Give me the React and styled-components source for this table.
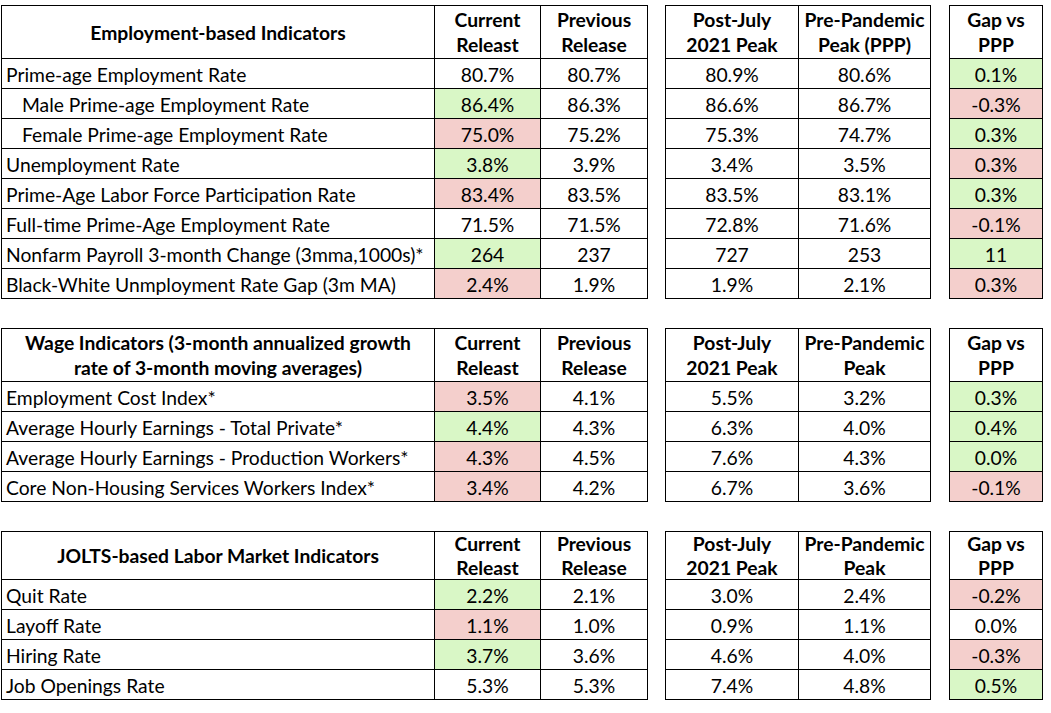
import React from "react";
import styled, { createGlobalStyle } from "styled-components";

const GlobalStyle = createGlobalStyle`
  body {
    margin: 0;
    background: #ffffff;
    font-family: Lato, "Liberation Sans", sans-serif;
    color: #000000;
  }
`;

const Page = styled.div`
  display: flex;
  flex-direction: column;
  gap: 29px;
  padding: 5px 0 0 1px;
`;

const Section = styled.div`
  display: flex;
  align-items: flex-start;
  gap: 17px;
`;

const Group = styled.table`
  border-collapse: collapse;
  table-layout: fixed;
  width: ${(p) => p.width}px;
  margin-right: ${(p) => p.spaceAfter || 0}px;
`;

const HeadCell = styled.th`
  border: 1px solid #000;
  padding: 0 2px;
  height: ${(p) => p.h}px;
  font-size: 19.3px;
  font-weight: 700;
  line-height: ${(p) => p.lh}px;
  text-align: center;
  vertical-align: middle;
  white-space: nowrap;
`;

const tones = {
  good: "#d9f7c6",
  bad: "#f4cfcc",
};

const Row = styled.tr`
  height: 30px;
`;

const Label = styled.td`
  border: 1px solid #000;
  padding: 1px 0 0 ${(p) => (p.indent ? 20 : 4)}px;
  font-size: 19.3px;
  white-space: nowrap;
  text-align: left;
  vertical-align: middle;
`;

const Value = styled.td`
  border: 1px solid #000;
  padding: 1px 0 0;
  font-size: 19.3px;
  text-align: center;
  vertical-align: middle;
  background: ${(p) => tones[p.tone] || "#ffffff"};
`;

const sections = [
  {
    title: ["Employment-based Indicators"],
    pre: ["Pre-Pandemic", "Peak (PPP)"],
    head: 52,
    lh: 25,
    rows: [
      ["Prime-age Employment Rate", false, "80.7%", "", "80.7%", "80.9%", "80.6%", "0.1%", "good"],
      ["Male Prime-age Employment Rate", true, "86.4%", "good", "86.3%", "86.6%", "86.7%", "-0.3%", "bad"],
      ["Female Prime-age Employment Rate", true, "75.0%", "bad", "75.2%", "75.3%", "74.7%", "0.3%", "good"],
      ["Unemployment Rate", false, "3.8%", "good", "3.9%", "3.4%", "3.5%", "0.3%", "bad"],
      ["Prime-Age Labor Force Participation Rate", false, "83.4%", "bad", "83.5%", "83.5%", "83.1%", "0.3%", "good"],
      ["Full-time Prime-Age Employment Rate", false, "71.5%", "", "71.5%", "72.8%", "71.6%", "-0.1%", "bad"],
      ["Nonfarm Payroll 3-month Change (3mma,1000s)*", false, "264", "good", "237", "727", "253", "11", "good"],
      ["Black-White Unmployment Rate Gap (3m MA)", false, "2.4%", "bad", "1.9%", "1.9%", "2.1%", "0.3%", "bad"],
    ],
  },
  {
    title: ["Wage Indicators (3-month annualized growth", "rate of 3-month moving averages)"],
    pre: ["Pre-Pandemic", "Peak"],
    head: 52,
    lh: 25,
    rows: [
      ["Employment Cost Index*", false, "3.5%", "bad", "4.1%", "5.5%", "3.2%", "0.3%", "good"],
      ["Average Hourly Earnings - Total Private*", false, "4.4%", "good", "4.3%", "6.3%", "4.0%", "0.4%", "good"],
      ["Average Hourly Earnings - Production Workers*", false, "4.3%", "bad", "4.5%", "7.6%", "4.3%", "0.0%", "good"],
      ["Core Non-Housing Services Workers Index*", false, "3.4%", "bad", "4.2%", "6.7%", "3.6%", "-0.1%", "bad"],
    ],
  },
  {
    title: ["JOLTS-based Labor Market Indicators"],
    pre: ["Pre-Pandemic", "Peak"],
    head: 47,
    lh: 23.5,
    rows: [
      ["Quit Rate", false, "2.2%", "good", "2.1%", "3.0%", "2.4%", "-0.2%", "bad"],
      ["Layoff Rate", false, "1.1%", "bad", "1.0%", "0.9%", "1.1%", "0.0%", ""],
      ["Hiring Rate", false, "3.7%", "good", "3.6%", "4.6%", "4.0%", "-0.3%", "bad"],
      ["Job Openings Rate", false, "5.3%", "", "5.3%", "7.4%", "4.8%", "0.5%", "good"],
    ],
  },
];

const Lines = ({ lines }) =>
  lines.map((l, i) => (
    <React.Fragment key={l}>
      {i > 0 && <br />}
      {l}
    </React.Fragment>
  ));

const IndicatorSection = ({ data }) => (
  <Section>
    <Group width={647}>
      <colgroup>
        <col style={{ width: 433 }} />
        <col style={{ width: 106 }} />
        <col style={{ width: 107 }} />
      </colgroup>
      <thead>
        <tr>
          <HeadCell h={data.head} lh={data.lh}>
            <Lines lines={data.title} />
          </HeadCell>
          <HeadCell h={data.head} lh={data.lh}>
            <Lines lines={["Current", "Releast"]} />
          </HeadCell>
          <HeadCell h={data.head} lh={data.lh}>
            <Lines lines={["Previous", "Release"]} />
          </HeadCell>
        </tr>
      </thead>
      <tbody>
        {data.rows.map((r) => (
          <Row key={r[0]}>
            <Label indent={r[1]}>{r[0]}</Label>
            <Value tone={r[3]}>{r[2]}</Value>
            <Value>{r[4]}</Value>
          </Row>
        ))}
      </tbody>
    </Group>

    <Group width={266} spaceAfter={1}>
      <colgroup>
        <col style={{ width: 133 }} />
        <col style={{ width: 132 }} />
      </colgroup>
      <thead>
        <tr>
          <HeadCell h={data.head} lh={data.lh}>
            <Lines lines={["Post-July", "2021 Peak"]} />
          </HeadCell>
          <HeadCell h={data.head} lh={data.lh}>
            <Lines lines={data.pre} />
          </HeadCell>
        </tr>
      </thead>
      <tbody>
        {data.rows.map((r) => (
          <Row key={r[0]}>
            <Value>{r[5]}</Value>
            <Value>{r[6]}</Value>
          </Row>
        ))}
      </tbody>
    </Group>

    <Group width={94}>
      <colgroup>
        <col style={{ width: 93 }} />
      </colgroup>
      <thead>
        <tr>
          <HeadCell h={data.head} lh={data.lh}>
            <Lines lines={["Gap vs", "PPP"]} />
          </HeadCell>
        </tr>
      </thead>
      <tbody>
        {data.rows.map((r) => (
          <Row key={r[0]}>
            <Value tone={r[8]}>{r[7]}</Value>
          </Row>
        ))}
      </tbody>
    </Group>
  </Section>
);

export default function App() {
  return (
    <>
      <GlobalStyle />
      <Page>
        {sections.map((s) => (
          <IndicatorSection key={s.title[0]} data={s} />
        ))}
      </Page>
    </>
  );
}
